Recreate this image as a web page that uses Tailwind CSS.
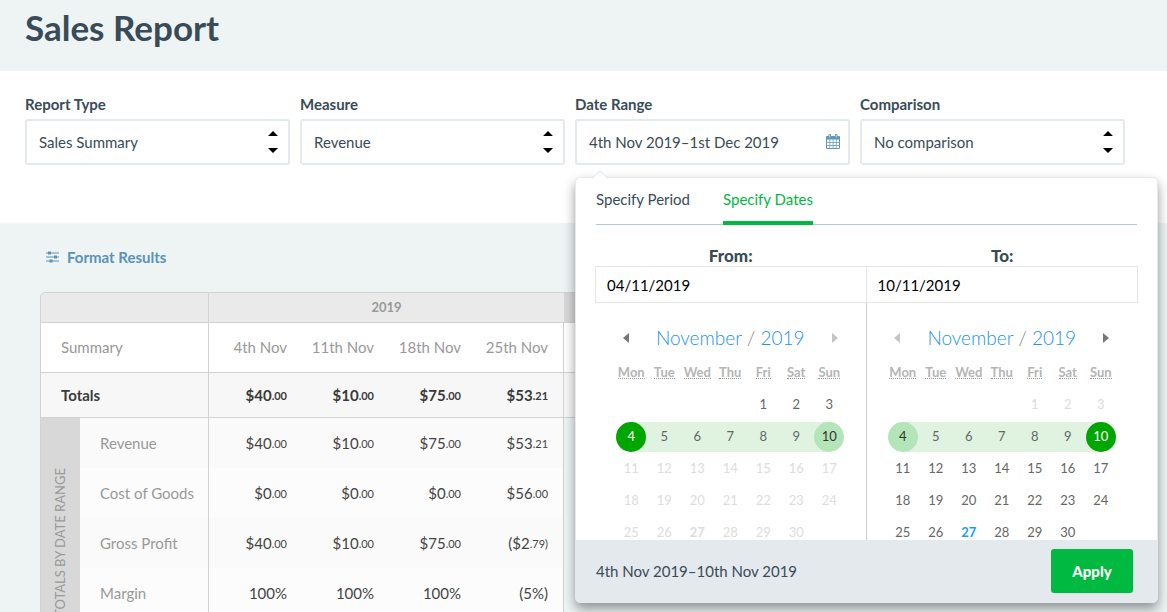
<!DOCTYPE html>
<html lang="en">
<head>
    <meta charset="utf-8">
    <title>Sales Report</title>
    <script src="https://cdn.jsdelivr.net/npm/@tailwindcss/browser@4"></script>
</head>
<body class="h-screen overflow-hidden bg-[#eef4f4] font-['Lato',sans-serif] text-[15px] text-[#394b58]">
    <header class="h-[71px] px-[25px] pt-1">
        <h1 class="text-[35px] leading-[46px] font-bold">Sales Report</h1>
    </header>

    <!-- Filters -->
    <section class="h-[152px] bg-white pl-[25px] pr-[42px] pt-[23px]">
        <form class="grid grid-cols-[53fr_53fr_55fr_53fr] gap-[10px]">
            <div>
                <label for="reportType" class="block leading-5 font-bold">Report Type</label>
                <div class="relative mt-[5px]">
                    <select id="reportType" class="h-[46px] w-full appearance-none rounded-[3px] border-2 border-[#e4e9ed] bg-white px-3">
                        <option>Sales Summary</option>
                    </select>
                    <svg class="pointer-events-none absolute right-3 top-3 h-[22px] w-[10px]" viewBox="0 0 10 22"><path d="M0 5 5 0l5 5zM0 17h10l-5 5z"/></svg>
                </div>
            </div>
            <div>
                <label for="measure" class="block leading-5 font-bold">Measure</label>
                <div class="relative mt-[5px]">
                    <select id="measure" class="h-[46px] w-full appearance-none rounded-[3px] border-2 border-[#e4e9ed] bg-white px-3">
                        <option>Revenue</option>
                    </select>
                    <svg class="pointer-events-none absolute right-3 top-3 h-[22px] w-[10px]" viewBox="0 0 10 22"><path d="M0 5 5 0l5 5zM0 17h10l-5 5z"/></svg>
                </div>
            </div>
            <div class="relative">
                <label for="dateRange" class="block leading-5 font-bold">Date Range</label>
                <div class="relative mt-[5px]">
                    <input id="dateRange" type="text" readonly value="4th Nov 2019–1st Dec 2019" class="h-[46px] w-full rounded-[3px] border-2 border-[#e4e9ed] bg-white px-3">
                    <svg class="pointer-events-none absolute right-[10px] top-[15px] h-[15px] w-[14px]" viewBox="0 0 14 15">
                        <path fill="#5f97bb" fill-rule="evenodd" d="M0 3q0-1 1-1h1.500V1q0-1 1-1h.5q1 0 1 1v1h4V1q0-1 1-1h.5q1 0 1 1v1H13q1 0 1 1v11q0 1-1 1H1q-1 0-1-1zM1 5.500V8h2.500V5.500zm3.200 0V8h2.500V5.500zm3.200 0V8h2.500V5.500zm3.200 0V8H13V5.500zM1 8.700V11h2.500V8.700zm3.200 0V11h2.500V8.700zm3.200 0V11h2.500V8.700zm3.200 0V11H13V8.700zM1 11.700V14h2.500v-2.300zm3.200 0V14h2.500v-2.300zm3.200 0V14h2.500v-2.300zm3.200 0V14H13v-2.300z"/>
                        <path stroke="#fff" stroke-width=".7" d="M3.700 1v2.500M10.300 1v2.500"/>
                    </svg>
                </div>

                <!-- Date range popover -->
                <div class="absolute left-0 top-full z-10 mt-3 w-[583px] rounded-[5px] border border-[#e4e9ed] bg-white shadow-[0_6px_12px_rgba(0,0,0,0.4)]">
                    <svg class="absolute -top-2 left-4 h-[9px] w-4" viewBox="0 0 16 9"><path fill="#fff" stroke="#dfe5ea" d="M0 8.500 8 1l8 7.500"/></svg>
                    <div class="mx-5 flex h-[47px] gap-[33px] border-b border-[#b5cace]">
                        <button type="button" class="h-[47px] pb-1">Specify Period</button>
                        <button type="button" class="h-[47px] border-b-4 border-[#00b941] text-[#00b941]">Specify Dates</button>
                    </div>
                    <div class="mx-[19px] mt-5 grid h-[295px] grid-cols-2 overflow-hidden">
                        <div class="calendar flex flex-col" data-side="from">
                            <label for="fromDate" class="block text-center text-[17px] leading-[21px] font-black">From:</label>
                            <input id="fromDate" type="text" value="04/11/2019" class="h-[37px] w-full border border-[#e6e6e6] px-[11px] text-black">
                            <div class="flex-1 border-r border-[#ccc]">
                                <div class="mx-auto flex h-[61px] w-[231px] items-center justify-between px-2 pt-[9px] text-[19px] font-light text-[#777]">
                                    <button type="button" aria-label="Previous month"><svg class="h-[10px] w-[6px]" viewBox="0 0 6 10"><path fill="#777" d="M6 0v10L0 5z"/></svg></button>
                                    <p><button type="button" class="text-[#1b92ef]">November</button> / <button type="button" class="text-[#1b92ef]">2019</button></p>
                                    <button type="button" aria-label="Next month"><svg class="h-[10px] w-[6px]" viewBox="0 0 6 10"><path fill="#c4c4c4" d="M0 0v10l6-5z"/></svg></button>
                                </div>
                                <table class="mx-auto w-[231px] table-fixed"></table>
                            </div>
                        </div>
                        <div class="calendar flex flex-col" data-side="to">
                            <label for="toDate" class="block text-center text-[17px] leading-[21px] font-black">To:</label>
                            <input id="toDate" type="text" value="10/11/2019" class="h-[37px] w-full border border-l-0 border-[#e6e6e6] px-[11px] text-black">
                            <div class="flex-1 pr-px">
                                <div class="mx-auto flex h-[61px] w-[231px] items-center justify-between px-2 pt-[9px] text-[19px] font-light text-[#777]">
                                    <button type="button" aria-label="Previous month"><svg class="h-[10px] w-[6px]" viewBox="0 0 6 10"><path fill="#c4c4c4" d="M6 0v10L0 5z"/></svg></button>
                                    <p><button type="button" class="text-[#1b92ef]">November</button> / <button type="button" class="text-[#1b92ef]">2019</button></p>
                                    <button type="button" aria-label="Next month"><svg class="h-[10px] w-[6px]" viewBox="0 0 6 10"><path fill="#777" d="M0 0v10l6-5z"/></svg></button>
                                </div>
                                <table class="mx-auto w-[231px] table-fixed"></table>
                            </div>
                        </div>
                    </div>
                    <div class="flex h-[62px] items-center justify-between rounded-b-[4px] bg-[#e4e9ed] pl-5 pr-6">
                        <span>4th Nov 2019–10th Nov 2019</span>
                        <button type="button" class="h-11 w-[82px] rounded-[3px] bg-[#00b941] font-black text-white">Apply</button>
                    </div>
                </div>
            </div>
            <div>
                <label for="comparison" class="block leading-5 font-bold">Comparison</label>
                <div class="relative mt-[5px]">
                    <select id="comparison" class="h-[46px] w-full appearance-none rounded-[3px] border-2 border-[#e4e9ed] bg-white px-3">
                        <option>No comparison</option>
                    </select>
                    <svg class="pointer-events-none absolute right-3 top-3 h-[22px] w-[10px]" viewBox="0 0 10 22"><path d="M0 5 5 0l5 5zM0 17h10l-5 5z"/></svg>
                </div>
            </div>
        </form>
    </section>

    <!-- Results -->
    <main class="px-10 pt-[23px]">
        <button type="button" class="ml-[6px] flex h-[22px] items-center gap-2 font-bold text-[#5a93b7]">
            <svg class="h-3 w-[13px]" viewBox="0 0 13 12" fill="#5a93b7"><path d="M0 1.500h13v1H0zM0 5.500h13v1H0zM0 9.500h13v1H0z"/><path d="M2 .500h3v3H2zM8 4.500h3v3H8zM3.500 8.500h3v3h-3z"/></svg>
            Format Results
        </button>
        <table class="mt-6 w-[640px] table-fixed border-separate border-spacing-0 text-right">
            <colgroup>
                <col class="w-10">
                <col class="w-[129px]">
                <col class="w-[93px]">
                <col class="w-[87px]">
                <col class="w-[87px]">
                <col class="w-[88px]">
                <col>
            </colgroup>
            <thead class="text-[#999]">
                <tr class="h-[31px] text-[13px]">
                    <th colspan="2" class="rounded-tl-[5px] border border-[#d2d2d2] bg-[#eaeaea]"></th>
                    <th colspan="4" class="border-y border-[#d2d2d2] bg-[#eaeaea] text-center font-bold">2019</th>
                    <th class="border-y border-[#d2d2d2] bg-[#d8d8d8]"></th>
                </tr>
                <tr class="h-[50px] bg-white">
                    <th colspan="2" class="border-x border-b border-[#d2d2d2] pl-5 text-left font-normal">Summary</th>
                    <th class="border-b border-[#d2d2d2] pr-[15px] font-normal">4th Nov</th>
                    <th class="border-b border-[#d2d2d2] pr-[15px] font-normal">11th Nov</th>
                    <th class="border-b border-[#d2d2d2] pr-[15px] font-normal">18th Nov</th>
                    <th class="border-b border-r border-[#d2d2d2] pr-[15px] font-normal">25th Nov</th>
                    <th class="border-b border-[#d2d2d2]"></th>
                </tr>
            </thead>
            <tbody class="text-[#444]">
                <tr class="h-[45px] bg-[#f7f7f7] font-bold text-[#3a3a3a]">
                    <th colspan="2" class="border-x border-b border-[#d2d2d2] pl-5 text-left">Totals</th>
                    <td class="border-b border-[#d2d2d2] pr-[15px]">$40<small class="align-[1px] text-[11px]">.00</small></td>
                    <td class="border-b border-[#d2d2d2] pr-[15px]">$10<small class="align-[1px] text-[11px]">.00</small></td>
                    <td class="border-b border-[#d2d2d2] pr-[15px]">$75<small class="align-[1px] text-[11px]">.00</small></td>
                    <td class="border-b border-r border-[#d2d2d2] pr-[15px]">$53<small class="align-[1px] text-[11px]">.21</small></td>
                    <td class="border-b border-[#d2d2d2]"></td>
                </tr>
                <tr class="h-[50px]">
                    <th rowspan="5" class="border-l border-[#d2d2d2] bg-[#d8d8d8] pt-1 text-center text-[13px] font-normal text-[#999]">
                        <span class="inline-block rotate-180 whitespace-nowrap [writing-mode:vertical-rl]">TOTALS BY DATE RANGE</span>
                    </th>
                    <th class="border-r border-[#d2d2d2] bg-[#fafafa] pl-5 text-left font-normal whitespace-nowrap text-[#999]">Revenue</th>
                    <td class="bg-[#fafafa] pr-[15px]">$40<small class="align-[1px] text-[11px]">.00</small></td>
                    <td class="bg-[#fafafa] pr-[15px]">$10<small class="align-[1px] text-[11px]">.00</small></td>
                    <td class="bg-[#fafafa] pr-[15px]">$75<small class="align-[1px] text-[11px]">.00</small></td>
                    <td class="border-r border-[#d2d2d2] bg-[#fafafa] pr-[15px]">$53<small class="align-[1px] text-[11px]">.21</small></td>
                </tr>
                <tr class="h-[50px]">
                    <th class="border-r border-[#d2d2d2] bg-[#fcfcfc] pl-5 text-left font-normal whitespace-nowrap text-[#999]">Cost of Goods</th>
                    <td class="bg-[#fcfcfc] pr-[15px]">$0<small class="align-[1px] text-[11px]">.00</small></td>
                    <td class="bg-[#fcfcfc] pr-[15px]">$0<small class="align-[1px] text-[11px]">.00</small></td>
                    <td class="bg-[#fcfcfc] pr-[15px]">$0<small class="align-[1px] text-[11px]">.00</small></td>
                    <td class="border-r border-[#d2d2d2] bg-[#fcfcfc] pr-[15px]">$56<small class="align-[1px] text-[11px]">.00</small></td>
                </tr>
                <tr class="h-[50px]">
                    <th class="border-r border-[#d2d2d2] bg-[#fafafa] pl-5 text-left font-normal whitespace-nowrap text-[#999]">Gross Profit</th>
                    <td class="bg-[#fafafa] pr-[15px]">$40<small class="align-[1px] text-[11px]">.00</small></td>
                    <td class="bg-[#fafafa] pr-[15px]">$10<small class="align-[1px] text-[11px]">.00</small></td>
                    <td class="bg-[#fafafa] pr-[15px]">$75<small class="align-[1px] text-[11px]">.00</small></td>
                    <td class="border-r border-[#d2d2d2] bg-[#fafafa] pr-[15px]">($2<small class="align-[1px] text-[11px]">.79)</small></td>
                </tr>
                <tr class="h-[50px]">
                    <th class="border-r border-[#d2d2d2] bg-[#fcfcfc] pl-5 text-left font-normal whitespace-nowrap text-[#999]">Margin</th>
                    <td class="bg-[#fcfcfc] pr-[15px]">100%</td>
                    <td class="bg-[#fcfcfc] pr-[15px]">100%</td>
                    <td class="bg-[#fcfcfc] pr-[15px]">100%</td>
                    <td class="border-r border-[#d2d2d2] bg-[#fcfcfc] pr-[15px]">(5%)</td>
                </tr>
                <tr class="h-[50px]">
                    <th class="border-r border-[#d2d2d2] bg-[#fafafa]"></th>
                    <td colspan="4" class="border-r border-[#d2d2d2] bg-[#fafafa]"></td>
                </tr>
            </tbody>
        </table>
    </main>

    <script>
        const START = 4, END = 10, TODAY = 27;

        // Fill both November 2019 calendars
        document.querySelectorAll('.calendar').forEach(cal => {
            const from = cal.dataset.side === 'from';
            let html = '<thead><tr class="h-[17px] text-[13px] leading-4 font-bold text-[#b5b5b5]">';
            ['Mon', 'Tue', 'Wed', 'Thu', 'Fri', 'Sat', 'Sun'].forEach(d => {
                html += '<th class="p-0 pb-[9px]"><span class="inline-block h-[15px] border-b border-dotted border-[#999]">' + d + '</span></th>';
            });
            html += '</tr></thead><tbody class="font-[\'Roboto\',sans-serif] text-[13px] text-[#666]">';
            for (let week = 0; week < 5; week++) {
                html += '<tr class="h-8">';
                for (let i = 0; i < 7; i++) {
                    const day = week * 7 + i - 3;
                    if (day < 1 || day > 30) { html += '<td></td>'; continue; }
                    let band = '';
                    if (day === START) band = '<span class="absolute inset-y-px left-1/2 right-0 bg-[#e0f3e1]"></span>';
                    else if (day === END) band = '<span class="absolute inset-y-px left-0 right-1/2 bg-[#e0f3e1]"></span>';
                    else if (day > START && day < END) band = '<span class="absolute inset-x-0 inset-y-px bg-[#e0f3e1]"></span>';
                    let style = '';
                    if (day === (from ? START : END)) style = 'bg-[#00a600] text-white';
                    else if (day === (from ? END : START)) style = 'bg-[#b3e5b8] text-[#333]';
                    else if (from ? day > END : day < START) style = 'text-[#ddd]';
                    else if (day === TODAY) style = 'text-[#1a9ff5]';
                    if (day === TODAY) style += ' font-bold';
                    html += '<td class="relative p-0 text-center">' + band +
                        '<button type="button" class="relative mx-auto block size-[30px] rounded-full ' + style + '">' + day + '</button></td>';
                }
                html += '</tr>';
            }
            cal.querySelector('table').innerHTML = html + '</tbody>';
        });
    </script>
</body>
</html>
